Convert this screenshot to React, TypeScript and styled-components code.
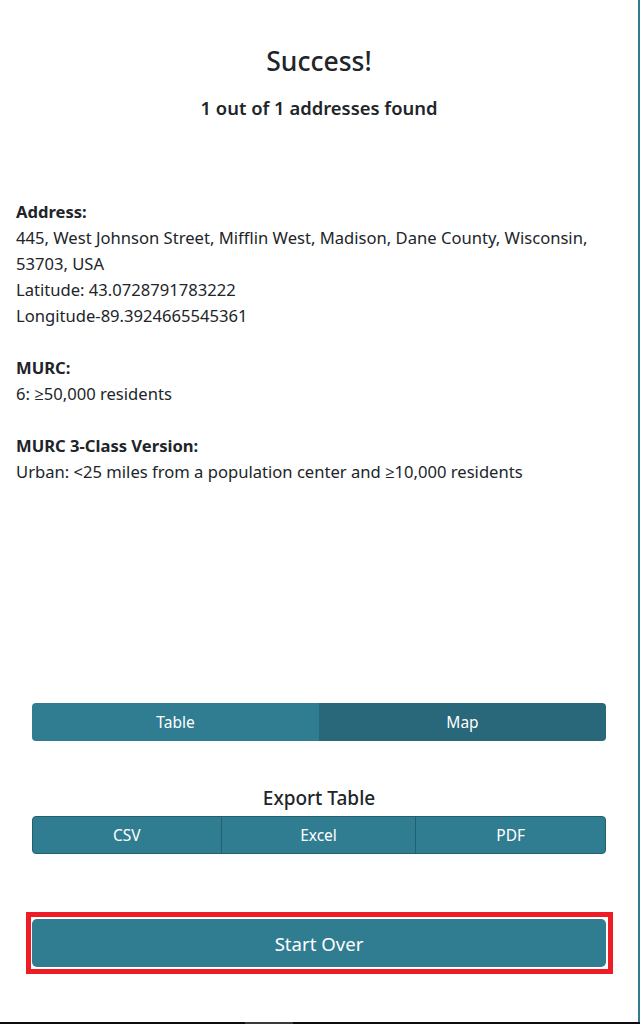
import React from "react";
import styled, { createGlobalStyle } from "styled-components";

const GlobalStyle = createGlobalStyle`
  html, body {
    margin: 0;
    padding: 0;
    background: #ffffff;
  }
  body {
    font-family: "Noto Sans", "Open Sans", sans-serif;
    color: #212529;
  }
  * {
    box-sizing: border-box;
  }
`;

const info = [
  {
    label: "Address:",
    lines: [
      "445, West Johnson Street, Mifflin West, Madison, Dane County, Wisconsin, 53703, USA",
      "Latitude: 43.0728791783222",
      "Longitude-89.3924665545361",
    ],
  },
  { label: "MURC:", lines: ["6: \u226550,000 residents"] },
  {
    label: "MURC 3-Class Version:",
    lines: ["Urban: <25 miles from a population center and \u226510,000 residents"],
  },
];

const App = () => {
  return (
    <>
      <GlobalStyle />
      <Page>
        <Header>
          <Title>Success!</Title>
          <Subtitle>1 out of 1 addresses found</Subtitle>
        </Header>
        <Results>
          {info.map((item) => (
            <Entry key={item.label}>
              <Label>{item.label}</Label>
              {item.lines.map((line) => (
                <Line key={line}>{line}</Line>
              ))}
            </Entry>
          ))}
        </Results>
        <ViewToggle>
          <ToggleButton>Table</ToggleButton>
          <ToggleButton $active>Map</ToggleButton>
        </ViewToggle>
        <ExportSection>
          <ExportTitle>Export Table</ExportTitle>
          <ExportGroup>
            <ExportButton $grow={189}>CSV</ExportButton>
            <ExportButton $grow={195}>Excel</ExportButton>
            <ExportButton $grow={190}>PDF</ExportButton>
          </ExportGroup>
        </ExportSection>
        <HighlightFrame>
          <StartOver>Start Over</StartOver>
        </HighlightFrame>
      </Page>
      <BottomBar>
        <BarThumb />
      </BottomBar>
    </>
  );
};

const Page = styled.div`
  width: 640px;
  height: 1022px;
  border-right: 2px solid #2e7c90;
  padding: 43px 16px 0;
  display: flex;
  flex-direction: column;
`;

const Header = styled.div`
  text-align: center;
`;

const Title = styled.h1`
  margin: 0;
  font-size: 26.5px;
  line-height: 37px;
  font-weight: 500;
`;

const Subtitle = styled.h2`
  margin: 15px 0 0;
  font-size: 18.4px;
  line-height: 26px;
  font-weight: 600;
`;

const Results = styled.div`
  margin-top: 78px;
  display: flex;
  flex-direction: column;
  gap: 26px;
  font-size: 16.6px;
  line-height: 26px;
`;

const Entry = styled.div`
  display: flex;
  flex-direction: column;
`;

const Label = styled.div`
  font-weight: 700;
`;

const Line = styled.div``;

const ViewToggle = styled.div`
  margin: 218px 16px 0;
  display: flex;
  height: 38px;
  border-radius: 4px;
  overflow: hidden;
`;

const ToggleButton = styled.button<{ $active?: boolean }>`
  flex: 1;
  border: none;
  margin: 0;
  padding: 0;
  font-family: inherit;
  font-size: 15.5px;
  color: #ffffff;
  background: ${(p) => (p.$active ? "#28687a" : "#307d92")};
  cursor: pointer;
`;

const ExportSection = styled.div`
  margin: 44px 16px 0;
  display: flex;
  flex-direction: column;
  align-items: stretch;
  gap: 5px;
`;

const ExportTitle = styled.div`
  text-align: center;
  font-size: 19px;
  line-height: 26px;
  font-weight: 500;
`;

const ExportGroup = styled.div`
  display: flex;
  height: 38px;
  border: 1px solid #23606f;
  border-radius: 4px;
  overflow: hidden;
  background: #307d92;
`;

const ExportButton = styled.button<{ $grow: number }>`
  flex: ${(p) => p.$grow} 1 0;
  border: none;
  border-left: 1px solid #23606f;
  margin: 0;
  padding: 0;
  font-family: inherit;
  font-size: 15.5px;
  color: #ffffff;
  background: transparent;
  cursor: pointer;
  &:first-child {
    border-left: none;
  }
`;

const HighlightFrame = styled.div`
  margin: 58px 0 0 10px;
  width: 587px;
  border: 5px solid #ee1c25;
  padding: 2px 2px 2px 1px;
  display: flex;
`;

const StartOver = styled.button`
  flex: 1;
  height: 48px;
  border: none;
  border-radius: 5px;
  background: #307d92;
  color: #ffffff;
  font-family: inherit;
  font-size: 18.6px;
  cursor: pointer;
`;

const BottomBar = styled.div`
  width: 640px;
  height: 2px;
  background: #0c0c10;
  padding-left: 245px;
`;

const BarThumb = styled.div`
  width: 48px;
  height: 2px;
  background: #3a3a3e;
`;

export default App;
